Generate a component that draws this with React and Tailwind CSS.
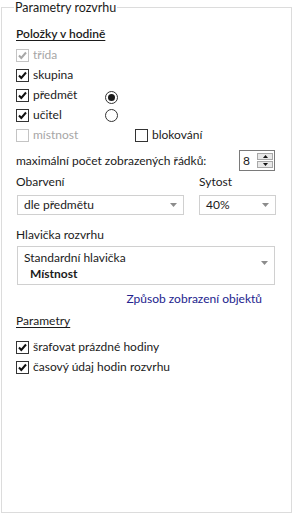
import React from 'react'

const FONT = "font-['Segoe_UI','Lato',sans-serif]"

function CheckBox({ checked, disabled }) {
  return (
    <span
      className={`flex h-[13px] w-[13px] shrink-0 items-center justify-center border bg-white ${
        disabled ? 'border-[#c4c4c4]' : 'border-[#333333]'
      }`}
    >
      {checked && (
        <svg width="11" height="11" viewBox="0 0 11 11">
          <path
            d="M2 5.5 L4.3 8 L9 2.5"
            fill="none"
            stroke={disabled ? '#a8a8a8' : '#111111'}
            strokeWidth="2"
          />
        </svg>
      )}
    </span>
  )
}

function CheckRow({ label, checked, disabled }) {
  return (
    <div className="flex h-[20px] items-center gap-[4px]">
      <CheckBox checked={checked} disabled={disabled} />
      <span className={disabled ? 'text-[#a6a6a6]' : ''}>{label}</span>
    </div>
  )
}

function Radio({ checked }) {
  return (
    <span className="flex h-[13px] w-[13px] items-center justify-center rounded-full border border-[#333333] bg-white">
      {checked && <span className="h-[7px] w-[7px] rounded-full bg-[#1b1b1b]" />}
    </span>
  )
}

function Arrow() {
  return (
    <svg width="7" height="4" viewBox="0 0 7 4" className="shrink-0">
      <path d="M0 0 H7 L3.5 4 Z" fill="#8c8c8c" />
    </svg>
  )
}

function Select({ value, className }) {
  return (
    <div className={`flex h-[20px] items-center justify-between border border-[#d0d0d0] bg-white pl-[6px] pr-[6px] ${className}`}>
      <span>{value}</span>
      <Arrow />
    </div>
  )
}

export default function App() {
  return (
    <div className={`h-[514px] w-[292px] bg-white text-[12px] leading-[16px] text-[#1b1b1b] ${FONT}`}>
      <fieldset className="ml-[1px] h-[513px] w-[291px] border border-[#dcdcdc] pl-[12px]">
        <legend className="px-[1px] text-[12.5px] leading-[15px]">Parametry rozvrhu</legend>

        <div className="ml-[2px] w-[259px]">
          {/* Položky v hodině */}
          <div className="mt-[11px] font-semibold underline underline-offset-[2px]">Položky v hodině</div>

          <div className="mt-[3px]">
            <CheckRow label="třída" checked disabled />
            <CheckRow label="skupina" checked />
            <div className="grid grid-cols-[89px_1fr]">
              <CheckRow label="předmět" checked />
              <div className="mt-[6px]"><Radio checked /></div>
            </div>
            <div className="grid grid-cols-[89px_1fr]">
              <CheckRow label="učitel" checked />
              <div className="mt-[4px]"><Radio /></div>
            </div>
            <div className="grid grid-cols-[119px_1fr]">
              <CheckRow label="místnost" disabled />
              <CheckRow label="blokování" />
            </div>
          </div>

          {/* Max rows */}
          <div className="mt-[5px] flex h-[21px] items-center justify-between">
            <span>maximální počet zobrazených řádků:</span>
            <div className="flex h-[21px] w-[36px] items-center border border-[#7a7a7a] bg-white pl-[3px]">
              <span className="flex-1">8</span>
              <div className="mr-[1px] flex flex-col gap-[1px]">
                <div className="flex h-[7px] w-[16px] items-center justify-center border border-[#a8a8a8] bg-[#e8e8e8]">
                  <svg width="5" height="3" viewBox="0 0 5 3"><path d="M0 3 H5 L2.5 0 Z" fill="#111" /></svg>
                </div>
                <div className="flex h-[7px] w-[16px] items-center justify-center border border-[#a8a8a8] bg-[#e8e8e8]">
                  <svg width="5" height="3" viewBox="0 0 5 3"><path d="M0 0 H5 L2.5 3 Z" fill="#111" /></svg>
                </div>
              </div>
            </div>
          </div>

          {/* Obarvení / Sytost */}
          <div className="mt-[3px] grid grid-cols-[183px_1fr]">
            <span>Obarvení</span>
            <span>Sytost</span>
          </div>
          <div className="mt-[5px] grid grid-cols-[167px_77px] gap-[15px] pl-[1px]">
            <Select value="dle předmětu" />
            <Select value="40%" />
          </div>

          {/* Hlavička rozvrhu */}
          <div className="mt-[12px]">Hlavička rozvrhu</div>
          <div className="ml-[1px] mt-[3px] flex h-[39px] items-center justify-between border border-[#d0d0d0] bg-white pl-[6px] pr-[6px]">
            <div className="flex flex-col">
              <span>Standardní hlavička</span>
              <span className="pl-[6px] font-bold">Místnost</span>
            </div>
            <div className="mb-[6px]"><Arrow /></div>
          </div>

          <div className="mr-[13px] mt-[6px] text-right text-[#23238e]">Způsob zobrazení objektů</div>

          {/* Parametry */}
          <div className="mt-[6px] underline underline-offset-[2px]">Parametry</div>
          <div className="mt-[8px]">
            <CheckRow label="šrafovat prázdné hodiny" checked />
            <CheckRow label="časový údaj hodin rozvrhu" checked />
          </div>
        </div>
      </fieldset>
    </div>
  )
}
